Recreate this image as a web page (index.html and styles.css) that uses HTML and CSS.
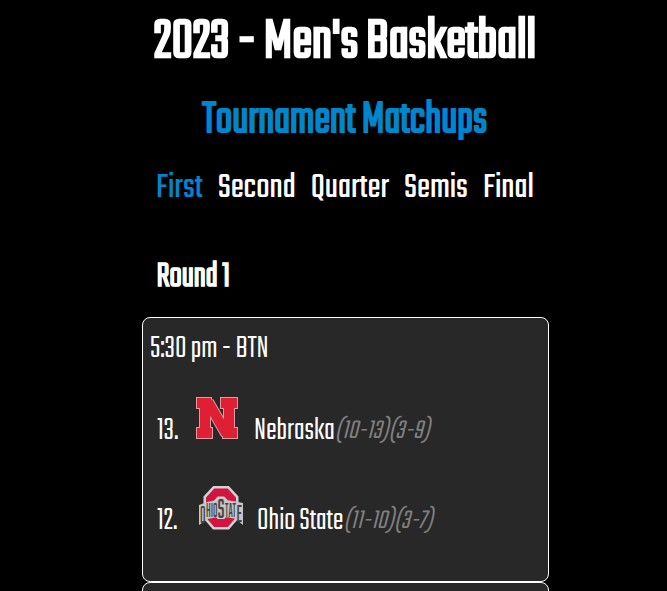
FILE: index.html
```html
<!DOCTYPE html>
<html lang="en">
<head>
<meta charset="utf-8">
<title>2023 - Men's Basketball</title>
<link rel="stylesheet" href="styles.css">
</head>
<body>
<main class="page">
  <h1 class="title">2023 - Men's Basketball</h1>
  <h2 class="subtitle">Tournament Matchups</h2>
  <nav class="rounds">
    <a class="active">First</a><a>Second</a><a>Quarter</a><a>Semis</a><a>Final</a>
  </nav>
  <h3 class="round">Round 1</h3>

  <section class="card">
    <p class="time">5:30 pm - BTN</p>
    <div class="team nebraska">
      <span class="seed">13.</span>
      <svg class="logo" width="42" height="42" viewBox="0 0 42 42">
        <g class="n-edge">
          <rect x="1" y="1" width="14" height="10"/><rect x="25" y="1" width="16" height="10"/><rect x="1" y="31" width="15" height="10"/><rect x="27" y="31" width="14" height="10"/>
          <rect x="4" y="8" width="10" height="25"/><rect x="28" y="8" width="10" height="25"/>
          <line x1="12" y1="5" x2="30.500" y2="37"/>
        </g>
        <g class="n-fill">
          <rect x="1" y="1" width="14" height="10"/><rect x="25" y="1" width="16" height="10"/><rect x="1" y="31" width="15" height="10"/><rect x="27" y="31" width="14" height="10"/>
          <rect x="4" y="8" width="10" height="25"/><rect x="28" y="8" width="10" height="25"/>
          <line x1="12" y1="5" x2="30.500" y2="37"/>
        </g>
      </svg>
      <span class="name">Nebraska</span>
      <em class="record">(10-13)(3-9)</em>
    </div>
    <div class="team ohio">
      <span class="seed">12.</span>
      <svg class="logo" width="44" height="43" viewBox="0 0 44 43">
        <path class="ring-edge" d="M17 6.500h10l6 6.500v17l-6 7h-10l-6-7v-17z"/>
        <path class="ring" d="M17 6.500h10l6 6.500v17l-6 7h-10l-6-7v-17z"/>
        <path class="plate" d="M0 19q9-4 18-5l1-2h7l1 2q8 1 17 3v22l-7-6q-14-4-28 0l-9 6z"/>
        <g class="word">
          <text class="end" x="1" y="37" textLength="5.500" lengthAdjust="spacingAndGlyphs">O</text>
          <text class="mid" x="7" y="31" textLength="11.500" lengthAdjust="spacingAndGlyphs">HIO</text>
          <text class="big" x="18.500" y="32" textLength="7" lengthAdjust="spacingAndGlyphs">S</text>
          <text class="mid" x="26" y="31" textLength="11" lengthAdjust="spacingAndGlyphs">TAT</text>
          <text class="end" x="37.500" y="36" textLength="5.500" lengthAdjust="spacingAndGlyphs">E</text>
        </g>
      </svg>
      <span class="name">Ohio State</span>
      <em class="record">(11-10)(3-7)</em>
    </div>
  </section>
  <section class="card"></section>
</main>
</body>
</html>
```
FILE: styles.css
```css
* { box-sizing: border-box; }
html, body { margin: 0; height: 100%; overflow: hidden; background: #000; }
body { color: #fff; font-family: Teko, Roboto, "Liberation Sans", sans-serif; font-weight: 300; }
h1, h2, h3, p { margin: 0; }
svg { display: block; overflow: visible; flex: none; }
.page { height: 591px; overflow: hidden; width: 407px; margin-left: 142px; padding-top: 23px; }
.title, .subtitle { white-space: nowrap; }
.title { padding-left: 12px; font-size: 60px; line-height: 40px; font-weight: 300; -webkit-text-stroke: 2.500px currentColor; }
.subtitle { padding-left: 60.500px; margin-top: 42px; line-height: 32px; color: #0086ce; font-size: 48px; font-weight: 300; -webkit-text-stroke: 1.800px currentColor; }
.rounds { display: flex; gap: 15px; margin: 40px 0 0 14px; font-size: 36px; line-height: 24px; font-weight: 400; }
.active { color: #0086ce; }
.round { margin: 65px 0 27px 14.500px; font-size: 36px; line-height: 24px; font-weight: 300; -webkit-text-stroke: 1.500px currentColor; }
.card { height: 265px; border: 1px solid #fff; border-radius: 8px; background: #282828; font-size: 32px; line-height: 22px; }
.time { padding: 20px 0 0 7px; }
.team { display: flex; align-items: flex-end; height: 43px; padding-left: 14px; white-space: nowrap; }
.seed, .name, .record { position: relative; top: 3px; }
.seed { width: 22px; }
.nebraska { margin-top: 36px; }
.ohio { margin-top: 47px; }
.nebraska .logo { margin: 0 16px 0 17px; }
.ohio .logo { margin: 0 14px 0 20px; }
.record { color: #808080; font-size: 28.200px; font-style: italic; }
.n-edge { fill: #df9aa2; stroke: #df9aa2; stroke-width: 2px; }
.n-edge line { stroke-width: 12px; }
.n-fill { fill: #df1f34; stroke: #df1f34; stroke-width: 0; }
.n-fill line { stroke-width: 10px; }
.ring-edge, .ring { fill: none; }
.ring-edge { stroke: #d0d2d3; stroke-width: 13px; }
.ring { stroke: #d2143f; stroke-width: 8px; }
.plate { fill: #c4c6c7; }
.word { font-family: Teko, sans-serif; font-weight: 400; fill: #454142; opacity: .99; }
.end { font-size: 27px; }
.mid { font-size: 23px; }
.big { font-size: 30px; }
```
